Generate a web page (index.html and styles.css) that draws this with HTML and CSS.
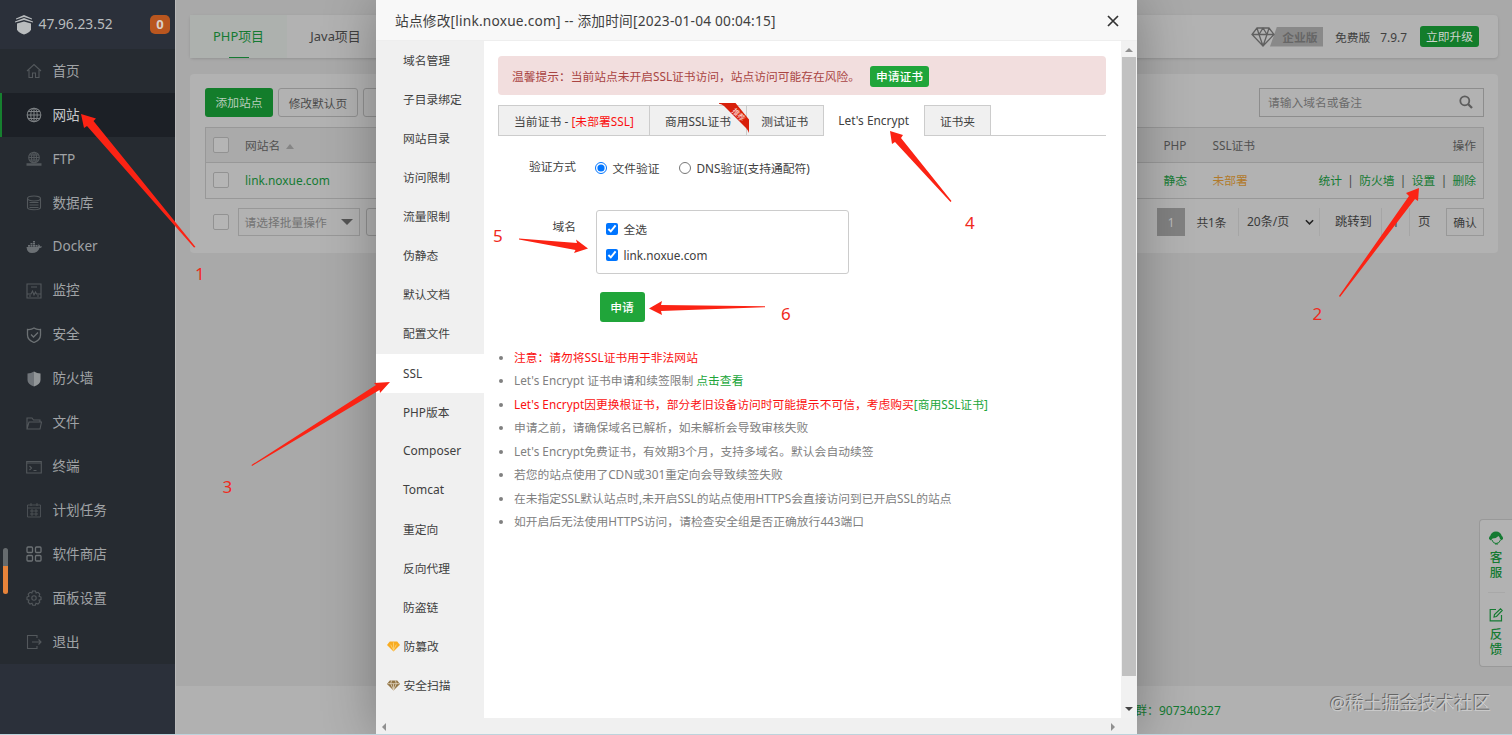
FILE: index.html
```html
<!DOCTYPE html>
<html lang="zh-CN">
<head>
<meta charset="utf-8">
<title>网站</title>
<link rel="stylesheet" href="styles.css">
</head>
<body>
<div class="app">
  <aside class="sidebar">
    <div class="brand">
      <svg class="brand-icon" viewBox="0 0 18 20" fill="#b9bcbe"><path d="M9 0 1 3.500v1L9 2l8 2.500v-1z"/><path d="M9 3 0 6.500v1L9 5l9 2.500v-1z"/><path d="M2 8.500 9 6.500l7 2v6Q15 17.500 9 19.500 3 17.500 2 14.500z"/></svg>
      <span class="ip">47.96.23.52</span><span class="count">0</span>
    </div>
    <nav class="menu">
      <a class="item"><svg viewBox="0 0 16 16"><path d="M1 8 8 1.500 15 8M3 7v7.500h3.500V10h3v4.500H13V7"/></svg><span>首页</span></a>
      <a class="item active"><svg viewBox="0 0 16 16"><circle cx="8" cy="8" r="6.800"/><ellipse cx="8" cy="8" rx="3.200" ry="6.800"/><path d="M1 8h14M2 4.500h12M2 11.500h12M8 1v14"/></svg><span>网站</span></a>
      <a class="item"><svg viewBox="0 0 16 16"><circle cx="8" cy="6.500" r="5.300"/><ellipse cx="8" cy="6.500" rx="2.500" ry="5.300"/><path d="M3 6.500h10M4 4h8M4 9h8M8 1v11"/><path d="M.5 13.500h15" stroke-width="2.500"/></svg><span>FTP</span></a>
      <a class="item"><svg viewBox="0 0 16 16"><ellipse cx="8" cy="3.500" rx="6.500" ry="2.500"/><path d="M1.500 3.500v9c0 3 13 3 13 0v-9M3.500 7.500h9M3.500 10h9M3.500 12.500h9"/></svg><span>数据库</span></a>
      <a class="item"><svg class="solid" viewBox="0 0 16 16"><path d="M.5 8h11q1.500-1 .8-3 2 1 1.700 2.500 1-.5 2 0-.5 1.500-2.500 1.500Q12 14 6 14 1 14 .5 8zM2 6h2v1.700H2zM4.500 6h2v1.700h-2zM7 6h2v1.700H7zM4.500 4h2v1.600h-2zM7 4h2v1.600H7zM7 2h2v1.600H7zM9.500 6h2v1.700h-2z"/></svg><span>Docker</span></a>
      <a class="item"><svg viewBox="0 0 16 16"><path d="M1 1h14v14H1zM5 4h6M1 11h4l1.500-3L8 12l1.500-3 1 2H15M3 13h2M11 13h2"/></svg><span>监控</span></a>
      <a class="item"><svg viewBox="0 0 16 16" class="mid"><path d="M8 1q3 2 6.500 1.500V8q0 5-6.500 7.500Q1.500 13 1.500 8V2.500Q5 3 8 1zM5 7.500 7.500 10 12 5.500"/></svg><span>安全</span></a>
      <a class="item"><svg class="solid" viewBox="0 0 16 16"><path d="M8 .5v15Q1.500 13 1.500 9V2.500Q5 2.500 8 .5z" fill="#70757a"/><path d="M8 .5q3 2 6.500 2V9q0 4-6.500 6.500z" fill="#929698"/></svg><span>防火墙</span></a>
      <a class="item"><svg viewBox="0 0 16 16"><path d="M1 14V3h5l1.500 2H14v2M1 14 3 7h12.500L14 14z"/></svg><span>文件</span></a>
      <a class="item"><svg viewBox="0 0 16 16"><path d="M.7 2.500h14.600v11.500H.7zM.7 4h14.600M3.500 7l2 2-2 2M7.500 11.500h3"/></svg><span>终端</span></a>
      <a class="item"><svg viewBox="0 0 16 16"><path d="M1.500 3h13v12h-13zM1.500 6h13M5 1v3M11 1v3M4 9h8M4 12h8M6 7v7M10 7v7" stroke-width=".8"/></svg><span>计划任务</span></a>
      <a class="item"><svg viewBox="0 0 16 16" class="mid"><rect x="1" y="1" width="5.500" height="5.500" rx="1"/><rect x="9.500" y="1" width="5.500" height="5.500" rx="1"/><rect x="1" y="9.500" width="5.500" height="5.500" rx="1"/><rect x="9.500" y="9.500" width="5.500" height="5.500" rx="1"/></svg><span>软件商店</span></a>
      <a class="item"><svg viewBox="0 0 16 16"><path d="M6.500 1h3l.6 2 2-.7 1.700 1.900-.8 2 2 .8v2.500l-2 .7.8 2-1.800 1.800-2-.8-.7 2H6.700l-.7-2-2 .8-1.800-1.800.8-2-2-.7V7l2-.8-.8-2L4 2.300l1.900.7z"/><circle cx="8" cy="8" r="2.200"/></svg><span>面板设置</span></a>
      <a class="item"><svg viewBox="0 0 16 16"><path d="M11 4V1.500H1.500v13H11V12M6 8h9M12.500 5.500 15 8l-2.500 2.500"/></svg><span>退出</span></a>
    </nav>
    <i class="gauge"></i>
  </aside>

  <main class="main">
    <header class="topbar">
      <div class="ptab on">PHP项目</div><div class="ptab">Java项目</div>
      <div class="license">
        <svg class="gem" viewBox="0 0 24 20" fill="none" stroke="#606060" stroke-width="1.300"><path d="M6 1h12l5 6.500L12 19 1 7.500zM1 7.500h22M6 1l2 6.500L12 19l4-11.500L18 1M8 7.500 12 1l4 6.500"/></svg>
        <span class="ent">企业版</span><span class="free">免费版</span><span class="ver">7.9.7</span><a class="btn upgrade">立即升级</a>
      </div>
    </header>
    <section class="card">
      <div class="tools">
        <a class="btn add">添加站点</a><a class="btn plain">修改默认页</a><a class="btn plain"></a>
        <div class="search"><span>请输入域名或备注</span><svg viewBox="0 0 14 14" fill="none" stroke="#5d5d5d"><circle cx="5.800" cy="5.800" r="4.500" stroke-width="1.800"/><path d="m9 9 4 4" stroke-width="2.300"/></svg></div>
      </div>
      <div class="table">
        <div class="row head"><i class="cb"></i><span class="name">网站名<i class="sort"></i></span><span class="php">PHP</span><span class="ssl">SSL证书</span><span class="ops">操作</span></div>
        <div class="row"><i class="cb"></i><span class="name green">link.noxue.com</span><span class="php green">静态</span><span class="ssl orange">未部署</span><span class="ops green"><a>统计</a><b>|</b><a>防火墙</a><b>|</b><a>设置</a><b>|</b><a>删除</a></span></div>
      </div>
      <div class="foot">
        <i class="cb"></i><div class="batch"><span>请选择批量操作</span><i></i></div><a class="btn plain exec"></a>
        <div class="pager"><span class="cur">1</span><span class="total">共1条</span><span class="size">20条/页<svg viewBox="0 0 10 6" fill="none" stroke="#222" stroke-width="1.700"><path d="m1 1 4 4 4-4"/></svg></span><span class="jump">跳转到</span><span class="num">1</span><span class="page">页</span><span class="ok">确认</span></div>
      </div>
    </section>
    <footer class="footer">群：907340327</footer>
  </main>
</div>

<aside class="help">
  <svg viewBox="0 0 14 14"><path d="M0 8Q-.2 5.500 1.200 5 2.500.5 7 .5t5.800 4.500Q14.200 5.500 14 8l-1.500 1.200L11 8Q11 6.500 9.500 5 7 7.500 3.500 7.500L2 9.500z" fill="#157a32"/><path d="M3 9q1 3.500 4 3.500 3.500 0 4.500-3.500M6 13h3" fill="none" stroke="#157a32"/></svg>
  <span>客</span><span>服</span><hr>
  <svg viewBox="0 0 14 14" fill="none" stroke="#157a32" stroke-width="1.200"><path d="M7 1.500H1.200v11.300h11.300V7M5 9l.5-2.500L11.500.8l1.700 1.700L7.500 8.500z"/></svg>
  <span>反</span><span>馈</span>
</aside>
<div class="watermark">@稀土掘金技术社区</div>

<div class="dialog">
  <div class="title"><span>站点修改[link.noxue.com] -- 添加时间[2023-01-04 00:04:15]</span><svg viewBox="0 0 12 12" stroke="#333" stroke-width="1.700"><path d="m1 1 10 10M11 1 1 11"/></svg></div>
  <div class="body">
    <nav class="side">
      <a>域名管理</a><a>子目录绑定</a><a>网站目录</a><a>访问限制</a><a>流量限制</a><a>伪静态</a><a>默认文档</a><a>配置文件</a><a class="sel">SSL</a><a>PHP版本</a><a class="en">Composer</a><a class="en">Tomcat</a><a>重定向</a><a>反向代理</a><a>防盗链</a>
      <a class="vip"><svg viewBox="0 0 14 11"><path d="M3 0h8l3 4-7 7-7-7z" fill="#f8ac22"/><path d="M4 3.500l3 6 3-6M7 1v9" fill="none" stroke="#ffd680" stroke-width=".8"/></svg>防篡改</a>
      <a class="vip"><svg viewBox="0 0 14 11"><path d="M3 0h8l3 4-7 7-7-7z" fill="#927545"/><path d="M1 3.500h12M5 0 4 3.500l3 7 3-7L9 0M7 4v6" fill="none" stroke="#e9dfcc" stroke-width=".8"/></svg>安全扫描</a>
    </nav>
    <div class="content">
      <div class="alert"><span>温馨提示：当前站点未开启SSL证书访问，站点访问可能存在风险。</span><a class="btn apply-top">申请证书</a></div>
      <div class="tabs">
        <span class="t1">当前证书 - <em>[未部署SSL]</em></span><span class="t2">商用SSL证书<svg class="ribbon" viewBox="0 0 30 30"><path d="M0 0h16.500L30 16.500V30q-1-3-3-5L5 3Q3 1 0 .8z" fill="#d8200b"/><text x="12.500" y="8.500" transform="rotate(45 12.500 8.500)" class="rtext">推荐</text></svg></span><span class="t3">测试证书</span><span class="t4">Let's Encrypt</span><span class="t5">证书夹</span>
      </div>
      <div class="field method"><label class="lab">验证方式</label><label class="opt"><input type="radio" name="verify" checked>文件验证</label><label class="opt dns"><input type="radio" name="verify">DNS验证(支持通配符)</label></div>
      <div class="field domain"><label class="lab">域名</label><div class="box"><label><input type="checkbox" checked>全选</label><label class="latin"><input type="checkbox" checked>link.noxue.com</label></div></div>
      <a class="btn apply">申请</a>
      <ul class="tips">
        <li><span class="red">注意：请勿将SSL证书用于非法网站</span></li>
        <li>Let's Encrypt 证书申请和续签限制 <a>点击查看</a></li>
        <li><span class="red">Let's Encrypt因更换根证书，部分老旧设备访问时可能提示不可信，考虑购买</span><a>[商用SSL证书]</a></li>
        <li>申请之前，请确保域名已解析，如未解析会导致审核失败</li>
        <li>Let's Encrypt免费证书，有效期3个月，支持多域名。默认会自动续签</li>
        <li>若您的站点使用了CDN或301重定向会导致续签失败</li>
        <li>在未指定SSL默认站点时,未开启SSL的站点使用HTTPS会直接访问到已开启SSL的站点</li>
        <li>如开启后无法使用HTTPS访问，请检查安全组是否正确放行443端口</li>
      </ul>
    </div>
    <div class="vbar"><i class="up"></i><i class="thumb"></i><i class="down"></i></div>
  </div>
  <div class="hbar"><i class="left"></i><i class="right"></i></div>
</div>

<svg class="marks" viewBox="0 0 1512 735">
  <g fill="#fb2314">
    <path d="M81 114 96 118.500 93.500 121 195.500 247 194 247.500 87 126 84 128z"/>
    <path d="M1419 188 1418 201 1415 199 1340 297 1339 296 1409 196 1406 193z"/>
    <path d="M390 382 380 393 379.500 390 252 466 251.500 465 376 385 374 383z"/>
    <path d="M890 131 903 135 901 138 951.500 201 950.500 202 895 142 892 144z"/>
    <path d="M588 248.500 574 253 575.500 250 519 239.500V238.500L577 243 576 239.500z"/>
    <path d="M649 308.500 662 301 661 305 765 306.200V307.200L661 311 662 315z"/>
  </g>
  <g class="nums"><text x="195" y="280">1</text><text x="1312.500" y="320">2</text><text x="222.500" y="493">3</text><text x="965" y="228.500">4</text><text x="493" y="242">5</text><text x="781" y="320">6</text></g>
</svg>
<div class="bottom-line"></div>
</body>
</html>
```
FILE: styles.css
```css
* { box-sizing: border-box; }
body { margin: 0; width: 1512px; height: 735px; overflow: hidden; font: 11.75px/16px "Noto Sans", "Noto Sans CJK SC", sans-serif; color: #404040; background: #a9a9a9; }
i, em { font-style: normal; }
a { text-decoration: none; }
.app { display: flex; height: 735px; }

.sidebar { position: relative; width: 176px; flex: none; background: #2b303a; color: #a0a3a6; border-right: 1px solid #b9b9b9; }
.brand { height: 49.3px; display: flex; align-items: center; padding: 0 5px 0 15px; color: #b9bcbe; font-size: 13.8px; }
.brand-icon { width: 18px; height: 20px; margin-right: 5.5px; }
.ip { margin-top: -2px; }
.count { margin-left: auto; width: 20px; height: 19px; border-radius: 5px; background: #b9561f; color: #d9d0ca; font-weight: bold; font-size: 13px; line-height: 19px; text-align: center; }
.menu { background: #262b31; }
.item { height: 43.93px; display: flex; align-items: center; gap: 10.5px; padding-left: 26px; font-size: 13.6px; }
.item span { margin-top: -1px; }
.item svg { width: 16px; height: 16px; fill: none; stroke: #53585c; stroke-width: 1.1; }
.item svg.mid { stroke: #6c7174; stroke-width: 1.3; }
.item svg.solid { fill: #6b7074; stroke: none; }
.item.active { background: #1c2026; color: #c6c8ca; box-shadow: inset 2px 0 #16802f; }
.item.active svg { stroke: #7d8184; }
.gauge { position: absolute; left: 3px; top: 548px; width: 5px; height: 46px; border-radius: 3px; background: linear-gradient(#666b6e 18px, #e8843a 18px); }

.main { flex: 1; display: flex; flex-direction: column; padding-top: 15px; }
.topbar { height: 43px; margin: 0 14px 16px; background: #b2b2b2; border-radius: 4px; display: flex; box-shadow: 0 1px 3px #0002; }
.ptab { width: 97px; line-height: 43px; text-align: center; font-size: 12.9px; }
.ptab.on { color: #157a32; background: linear-gradient(#157a32, #157a32) 50% 100% / 20px 1.5px no-repeat #adb1ae; }
.license { margin-left: auto; display: flex; align-items: center; padding-right: 19px; }
.gem { width: 24px; height: 20px; z-index: 1; }
.ent { width: 53px; height: 20px; margin-left: -5px; padding-left: 7px; line-height: 20px; background: #898989; color: #666; text-align: center; font-weight: bold; clip-path: polygon(7px 0, 100% 0, 100% 100%, 0 100%); }
.free { margin-left: 12px; }
.ver { margin: 0 13px 0 10px; font-size: 11.9px; }
.btn { display: block; border-radius: 3px; text-align: center; white-space: nowrap; }
.upgrade { width: 59px; height: 21px; line-height: 20px; background: #137d2b; color: #ccd3cd; }
.card { height: 179px; margin: 0 14px; background: #b2b2b2; border-radius: 4px; padding: 14px 14px 0 15px; }
.tools { display: flex; gap: 5px; }
.tools .btn { height: 29px; line-height: 28px; }
.add { width: 68px; background: #137d2b; color: #b8cdbc; }
.plain { width: 80px; border: 1px solid #909090; color: #4a4a4a; }
.search { margin-left: auto; width: 225px; height: 29px; border: 1px solid #8d8d8d; padding: 0 10px 2px 8px; display: flex; align-items: center; justify-content: space-between; color: #6b6b6b; }
.search svg { width: 14px; height: 14px; }
.table { margin-top: 10px; border: 1px solid #989898; height: 72px; }
.row { display: flex; height: 35px; align-items: center; padding: 0 7px 1px; color: #505050; }
.row.head { background: #aaa; border-bottom: 1px solid #989898; }
.row b { color: #444; font-weight: normal; padding: 0 5.4px; }
.cb { width: 16px; height: 16px; border: 1px solid #929292; border-radius: 2px; background: #b5b5b5; flex: none; }
.name { width: 918.500px; margin-left: 16px; }
.name.green { font-size: 11.9px; }
.sort { display: inline-block; margin-left: 6px; border: 4.5px solid transparent; border-top: 0; border-bottom: 5px solid #858585; vertical-align: 1px; }
.php { width: 49px; }
.ops { margin-left: auto; display: flex; }
.row .green { color: #157a32; }
.row .orange { color: #b17a2b; }
.foot { display: flex; align-items: center; margin-top: 9px; padding-left: 8px; height: 28px; }
.batch { margin-left: 8.5px; width: 122px; height: 28px; border: 1px solid #989898; display: flex; align-items: center; justify-content: space-between; padding: 0 6px 1px; color: #747474; }
.batch i { border: 6px solid transparent; border-top-color: #555; border-bottom: 0; }
.exec { margin-left: 6px; height: 28px; }
.pager { margin-left: auto; display: flex; line-height: 28px; color: #3a3a3a; }
.cur { width: 28px; background: #818181; color: #bbb; text-align: center; }
.total { width: 54px; text-align: center; border-right: 1px solid #a5a5a5; }
.size { width: 81px; display: flex; align-items: center; justify-content: space-between; padding: 0 5px 0 8px; border-right: 1px solid #a8a8a8; font-size: 12px; }
.size svg { width: 9px; height: 6px; }
.jump { width: 62px; padding-left: 15px; border-right: 1px solid #a5a5a5; font-size: 12.3px; }
.num { width: 28px; text-align: center; border-right: 1px solid #a5a5a5; }
.page { width: 36px; padding-left: 8px; font-size: 12.5px; }
.ok { width: 38px; height: 28px; line-height: 26px; border: 1px solid #989898; text-align: center; }
.footer { margin-top: auto; height: 49px; background: #b1b1b1; line-height: 49px; padding-left: 959px; color: #157a32; font-size: 12px; }

.help { position: absolute; right: 0; top: 519px; width: 33px; height: 148px; border: 1px solid #999; border-right: 0; border-radius: 4px 0 0 4px; background: #b2b2b2; color: #157a32; display: flex; flex-direction: column; align-items: center; padding-top: 11px; font-size: 12.5px; line-height: 14.500px; font-weight: 500; }
.help svg { width: 14px; height: 14px; margin-bottom: 6px; flex: none; }
.help span { height: 14.500px; }
.help hr { width: 17px; border: 0; border-top: 1px solid #a8a8a8; margin: 12px 0 15px; }
.watermark { position: absolute; right: 21px; top: 692px; font-size: 18.1px; line-height: 22px; color: #c9c9c9; text-shadow: -1px -1px #656565; }

.dialog { position: absolute; left: 376px; top: 0; width: 761px; height: 735px; background: #fff; display: flex; flex-direction: column; box-shadow: 1px 1px 50px rgba(0,0,0,.3); }
.title { height: 41px; flex: none; background: #f8f8f8; border-bottom: 1px solid #eee; display: flex; align-items: center; justify-content: space-between; padding: 2px 18px 0 19px; font-size: 13.7px; letter-spacing: .21px; }
.title span { margin-top: -1px; }
.title svg { width: 12px; height: 12px; }
.body { height: 677px; display: flex; }
.side { width: 107.500px; flex: none; background: #f0f0f0; }
.side a { display: block; height: 39.07px; line-height: 38.500px; padding-left: 27px; }
.side a.sel { background: #fff; }
.side a.en { font-size: 12px; }
.side a.vip { padding-left: 11px; display: flex; align-items: center; gap: 3.500px; }
.vip svg { width: 13px; height: 11px; }
.content { flex: 1; padding: 15px 15px 0 14.500px; }
.alert { height: 39px; background: #f2dede; border-radius: 4px; display: flex; align-items: center; padding: 1px 14px 0; color: #a94442; }
.apply-top { width: 59px; height: 21px; line-height: 21px; background: #20a53a; color: #fff; margin-left: 10px; font-weight: 500; }
.tabs { margin-top: 10px; height: 31px; display: flex; line-height: 30px; border-bottom: 1px solid #ccc; }
.tabs span { border: 1px solid #ccc; border-left: 0; background: #f0f0f0; text-align: center; position: relative; height: 31px; }
.tabs .t1 { width: 152px; border-left: 1px solid #ccc; letter-spacing: .06px; }
.tabs em, .red { color: #fb1010; }
.t2 { width: 97px; }
.t3 { width: 76.500px; }
.tabs .t4 { width: 101.500px; background: #fff; border-bottom: 0; border-top: 0; font-size: 11.9px; }
.t5 { width: 66px; }
.ribbon { position: absolute; right: -3px; top: -3px; width: 30px; height: 30px; z-index: 2; }
.rtext { font-size: 7.5px; fill: #ffe5e0; letter-spacing: -.3px; }
.field { display: flex; }
.field label { display: flex; align-items: center; }
.field .lab { width: 78px; justify-content: flex-end; margin-right: 18.500px; }
.field input { margin: 0; width: 12px; height: 12px; }
.method { height: 20px; margin-top: 22px; }
.method .lab { height: 16px; }
.opt input { margin-right: 6px; }
.dns { margin-left: 19px; }
.domain { margin-top: 32px; }
.domain .lab { height: 31px; margin-right: 19.500px; }
.box { width: 253px; height: 64px; border: 1px solid #ccc; border-radius: 3px; padding: 5.500px 9.500px; }
.box label { height: 25.500px; gap: 5.500px; }
.apply { width: 45px; height: 30px; line-height: 31px; background: #20a53a; color: #fff; margin: 18px 0 0 101.500px; font-weight: 500; }
.tips { margin: 24px 0 0; padding-left: 16px; color: #808080; line-height: 23.46px; white-space: nowrap; letter-spacing: .02px; }
.tips a { color: #20a53a; }
.vbar { width: 16px; flex: none; background: #f1f1f1; display: flex; flex-direction: column; align-items: center; }
.vbar .thumb { width: 14px; height: 619px; background: #c1c1c1; }
.up { border: 4px solid transparent; border-top: 0; border-bottom-color: #909090; margin: 7px 0 5px; }
.down { border: 4px solid transparent; border-bottom: 0; border-top-color: #444; margin-top: 31px; }
.hbar { flex: 1; background: #f0f0f0; display: flex; justify-content: space-between; padding: 5px 22px 0 6px; }
.hbar i { height: 8px; border: 4px solid transparent; }
.hbar .left { border-left: 0; border-right-color: #909090; }
.hbar .right { border-right: 0; border-left-color: #909090; }
.marks { position: absolute; left: 0; top: 0; width: 1512px; height: 735px; pointer-events: none; }
.nums { font-size: 17px; fill: #f02a1d; }
.bottom-line { position: absolute; left: 0; top: 734px; width: 1512px; height: 1px; background: #bdd3dc; }
```
